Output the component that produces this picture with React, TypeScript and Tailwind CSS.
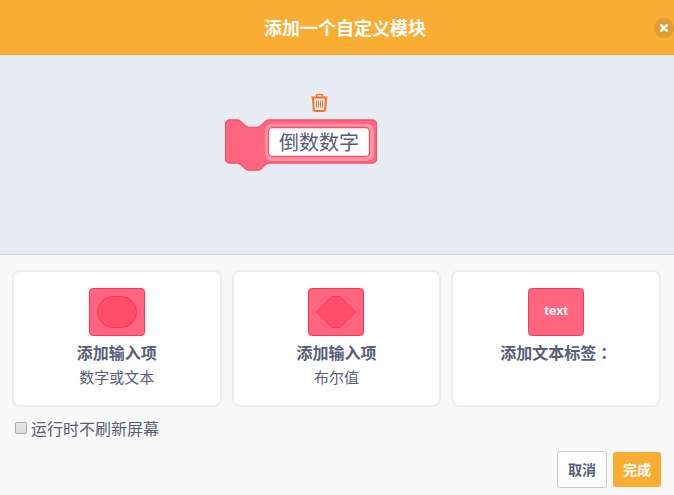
import { useState } from 'react';
import type { ReactNode } from 'react';

const CJK = "font-['Liberation_Sans','Noto_Sans_CJK_SC',sans-serif]";

function TrashIcon() {
  return (
    <svg viewBox="0 0 18 18" className="h-[18px] w-[18px]" fill="none" stroke="#ff7026" strokeWidth="2" aria-hidden="true">
      <path d="M0.500 3.500h16" />
      <path d="M5.500 3V1.200q0-.7.700-.7h4.600q.7 0 .7.700V3" strokeWidth="1.500" />
      <path d="M2 4l.7 11.500q.1 1.500 1.500 1.500h8.600q1.400 0 1.500-1.500L15 4" />
      <path d="M5.500 6.500v7M7.500 6.500v7M9.500 6.500v7M11.500 6.500v7" strokeWidth="1" />
    </svg>
  );
}

function DefinitionBlock() {
  const [name, setName] = useState('倒数数字');
  return (
    <div className="flex flex-col">
      <button type="button" aria-label="删除" className="ml-[86px] h-[18px] w-[18px] cursor-pointer">
        <TrashIcon />
      </button>
      <div className="mt-[7px] grid w-[152px]">
        <svg viewBox="0 0 152 52" className="col-start-1 row-start-1 h-[52px] w-[152px]" aria-hidden="true">
          <path
            d="M4.500 1H12c2 0 3 .8 4.500 2.300l3 3c1.300 1.300 2.500 2 4.500 2h8c2 0 3.200-.7 4.500-2l3-3C41 1.800 42 1 44 1H147.500a4 4 0 0 1 4 4V40a4 4 0 0 1-4 4H44c-2 0-3 .8-4.500 2.300l-2.500 2.700c-1.300 1.300-2.500 2-4.500 2H24c-2 0-3.200-.7-4.500-2l-3-2.700C15 44.800 14 44 12 44H4.500a4 4 0 0 1-4-4V5a4 4 0 0 1 4-4z"
            fill="#ff6680"
            stroke="#ff4d6a"
            strokeWidth="1.300"
          />
          <rect x="40" y="5" width="109" height="37" rx="6" fill="#ff94a6" />
          <rect x="43.500" y="8.500" width="101" height="29" rx="4" fill="#fff" stroke="#ff4d6a" strokeWidth="1.300" />
        </svg>
        <input
          aria-label="模块名称"
          value={name}
          onChange={(e) => setName(e.target.value)}
          className="col-start-1 row-start-1 mt-2.5 ml-11 h-7 w-[100px] bg-transparent text-center text-[20px] leading-7 text-[#575e75] outline-none"
        />
      </div>
    </div>
  );
}

function OptionCard({ icon, title, note }: { icon: ReactNode; title: ReactNode; note?: string }) {
  return (
    <button
      type="button"
      className="flex h-[137px] cursor-pointer flex-col items-center rounded-lg border-2 border-[#e9eef2] bg-white pt-4 text-[#575e75]"
    >
      {icon}
      <span className="mt-1.5 text-[16px] leading-6 font-bold">{title}</span>
      {note && <span className="text-[15px] leading-6">{note}</span>}
    </button>
  );
}

function BlockIcon({ children }: { children: ReactNode }) {
  return (
    <svg viewBox="0 0 56 48" className="h-12 w-14 shrink-0" aria-hidden="true">
      <rect x=".5" y=".5" width="55" height="47" rx="3.500" fill="#ff6680" stroke="#ff3355" />
      {children}
    </svg>
  );
}

export default function App() {
  return (
    <div className={`flex min-h-screen flex-col bg-[#f9f9f9] ${CJK}`}>
      <header className="grid h-[55px] grid-cols-[1fr_20px] items-center bg-[#f9ad32] text-white">
        <h1 className="pt-0.5 pl-9 text-center text-[18px] leading-6 font-bold">添加一个自定义模块</h1>
        <button type="button" aria-label="关闭" className="flex h-5 w-5 cursor-pointer items-center justify-center rounded-full bg-[#de9c35]">
          <svg viewBox="0 0 8 8" className="h-2 w-2" stroke="#fff" strokeWidth="2.600" strokeLinecap="round" aria-hidden="true">
            <path d="M1.300 1.300l5.400 5.400M6.700 1.300L1.300 6.700" />
          </svg>
        </button>
      </header>
      <main className="flex h-[200px] justify-center border-b border-[#d4d9e0] bg-[#e8ecf3] pt-[39px] pr-[72px]">
        <DefinitionBlock />
      </main>
      <section className="flex flex-col pt-[15px] pr-[13px] pb-[7px] pl-3">
        <div className="grid grid-cols-3 gap-2.5">
          <OptionCard
            title="添加输入项"
            note="数字或文本"
            icon={
              <BlockIcon>
                <rect x="8.500" y="8.500" width="39" height="31" rx="15.500" fill="#ff4d6a" stroke="#ff3355" />
              </BlockIcon>
            }
          />
          <OptionCard
            title="添加输入项"
            note="布尔值"
            icon={
              <BlockIcon>
                <path d="M24 8.500h8L47.500 24 32 39.500h-8L8.500 24z" fill="#ff4d6a" stroke="#ff3355" />
              </BlockIcon>
            }
          />
          <OptionCard
            title={
              <>
                添加文本标签<span className="font-['Noto_Sans_CJK_TC',sans-serif] leading-none">：</span>
              </>
            }
            icon={
              <span className="flex h-12 w-14 shrink-0 items-center justify-center rounded border border-[#ff3355] bg-[#ff6680] pb-0.5 text-[13px] font-bold text-white">
                text
              </span>
            }
          />
        </div>
        <label className="mt-[11px] flex items-center gap-1 self-start pl-[3px] text-[16px] leading-6 text-[#575e75]">
          <input
            type="checkbox"
            className="mb-1 h-3 w-3 appearance-none rounded-xs border border-[#a9a9a9] bg-linear-to-b from-[#e8e8e8] to-[#dcdcdc] checked:bg-[#575e75]"
          />
          运行时不刷新屏幕
        </label>
        <div className="mt-[9px] flex items-center justify-end gap-1.5 text-[14px] leading-5 font-bold">
          <button type="button" className="h-[37px] cursor-pointer rounded-[3px] border border-[#ccc] bg-white px-2.5 text-[#575e75]">
            取消
          </button>
          <button type="button" className="h-[35px] cursor-pointer rounded-[3px] bg-[#f9ad32] px-2.5 text-white">
            完成
          </button>
        </div>
      </section>
    </div>
  );
}
